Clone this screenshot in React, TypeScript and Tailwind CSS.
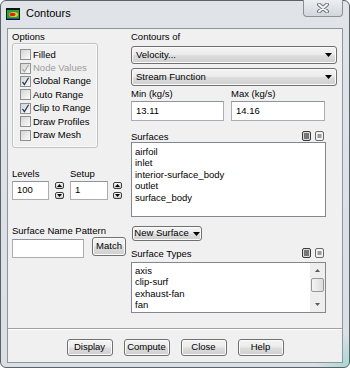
import type { ReactNode } from "react";

const btn =
  "flex items-center justify-center whitespace-nowrap rounded-[3px] border border-[#707070] bg-[linear-gradient(to_bottom,#f4f4f4_0%,#ebebeb_48%,#dddddd_52%,#cfcfcf_100%)] shadow-[inset_0_0_0_1px_#fbfbfb]";
const input = "border border-[#abadb3] border-t-[#8f939b] bg-white";
const arrowBox =
  "flex h-[7px] w-[9px] items-center justify-center rounded-[2px] border border-[#3c3c3c] bg-[linear-gradient(to_bottom,#f6f6f6,#cdcdcd)]";

function Check({ label, checked = false, disabled = false }: { label: string; checked?: boolean; disabled?: boolean }) {
  return (
    <div className="flex h-[13.4px] items-center gap-[2px]">
      <span className="flex h-[11px] w-[11px] items-center justify-center border border-[#8e8f8f] bg-[linear-gradient(135deg,#d4d4d4,#fbfbfb)]">
        {checked && (
          <svg width="9" height="9" viewBox="0 0 9 9">
            <path d="M1.5 4.8 L3.4 7.6 L7.6 0.8" fill="none" stroke={disabled ? "#a8a8a8" : "#24345a"} strokeWidth="1.2" />
          </svg>
        )}
      </span>
      <span className={disabled ? "text-[#9b9b9b]" : ""}>{label}</span>
    </div>
  );
}

function Spin() {
  return (
    <div className="flex flex-col gap-[3px] pt-[1px]">
      <span className={arrowBox}>
        <svg width="5" height="3">
          <path d="M0 3 L2.5 0 L5 3 Z" fill="#000" />
        </svg>
      </span>
      <span className={arrowBox}>
        <svg width="5" height="3">
          <path d="M0 0 L5 0 L2.5 3 Z" fill="#000" />
        </svg>
      </span>
    </div>
  );
}

function SelIcon({ all = false }: { all?: boolean }) {
  return (
    <svg width="9" height="10" viewBox="0 0 9 10">
      <rect x="0.5" y="0.5" width="8" height="9" rx="1.5" fill={all ? "#dcdcdc" : "#f2f2f2"} stroke={all ? "#3a3a3a" : "#6a6a6a"} />
      {all ? (
        <path d="M2 3 H7 M2 5 H7 M2 7 H7" stroke="#111" strokeWidth="1.2" />
      ) : (
        <path d="M2.5 4 H6.5 M2.5 6 H6.5" stroke="#444" strokeWidth="1" />
      )}
    </svg>
  );
}

function ListHead({ label }: { label: string }) {
  return (
    <div className="flex h-[11px] w-[195px] items-end justify-between pr-[2px]">
      <span className="leading-[11px]">{label}</span>
      <div className="flex gap-[4px] self-start">
        <SelIcon all />
        <SelIcon />
      </div>
    </div>
  );
}

function Drop({ children }: { children: ReactNode }) {
  return (
    <div className={`${btn} h-[18px] w-[206px] !justify-between pl-[4px] pr-[4px]`}>
      <span>{children}</span>
      <svg width="7" height="4">
        <path d="M0 0 L7 0 L3.5 4 Z" fill="#000" />
      </svg>
    </div>
  );
}

export default function App() {
  return (
    <div className="flex h-[368px] w-[350px] flex-col rounded-[6px] border border-[#5d6168] bg-[radial-gradient(circle_at_100%_100%,#a6d8d2_0,transparent_34px),linear-gradient(to_bottom,#e0e4e9,#dadfe5)] px-[6px] pb-[4px] font-['Liberation_Sans',Arial,sans-serif] text-[9.5px] text-black">
      {/* title bar */}
      <div className="flex h-[27px] items-center">
        <svg width="14" height="12" viewBox="0 0 14 12" className="ml-[-1px] mt-[-2px]">
          <rect x="0" y="0" width="14" height="12" fill="#141414" />
          <rect x="1" y="2" width="12" height="9" fill="#22a83a" />
          <ellipse cx="7.5" cy="6.5" rx="4.5" ry="2.6" fill="#e6d21c" />
          <ellipse cx="6.5" cy="6.5" rx="3" ry="1.7" fill="#dd2222" />
          <rect x="1" y="10" width="12" height="1" fill="#1f4fb8" />
        </svg>
        <span className="ml-[6px] mt-[-2px] text-[11px]">Contours</span>
        <div className="mb-auto ml-auto mt-[-1px] flex h-[17px] w-[40px] items-center justify-center rounded-b-[4px] border border-t-0 border-[#8a9098] bg-[linear-gradient(to_bottom,#eceff2,#d2d7dd)]">
          <svg width="14" height="10" viewBox="0 0 14 10">
            <path d="M3 1.5 L11 8.5 M11 1.5 L3 8.5" stroke="#6e737a" strokeWidth="4" strokeLinecap="round" />
            <path d="M3 1.5 L11 8.5 M11 1.5 L3 8.5" stroke="#f5f5f5" strokeWidth="2" strokeLinecap="round" />
          </svg>
        </div>
      </div>

      {/* client area */}
      <div className="flex flex-1 flex-col border border-[#8f959c] bg-[#f0f0f0]">
        <div className="flex gap-[5px] pl-[4px] pt-[2px]">
          {/* left column */}
          <div className="flex w-[114px] flex-col">
            <div className="h-[12px] leading-[12px]">Options</div>
            <div className="h-[105px] w-[86px] rounded-[3px] border border-[#bcc3ca] pl-[7px] pt-[4px] shadow-[inset_0_0_0_1px_#fbfbfb]">
              <Check label="Filled" />
              <Check label="Node Values" checked disabled />
              <Check label="Global Range" checked />
              <Check label="Auto Range" />
              <Check label="Clip to Range" checked />
              <Check label="Draw Profiles" />
              <Check label="Draw Mesh" />
            </div>

            <div className="mt-[20px] flex">
              <div className="flex w-[58px] flex-col">
                <div className="h-[12px] leading-[12px]">Levels</div>
                <div className="mt-[1px] flex">
                  <div className={`${input} flex h-[19px] w-[37px] items-center pl-[4px]`}>100</div>
                  <div className="ml-[6px]">
                    <Spin />
                  </div>
                </div>
              </div>
              <div className="flex flex-col">
                <div className="h-[12px] leading-[12px]">Setup</div>
                <div className="mt-[1px] flex">
                  <div className={`${input} flex h-[19px] w-[38px] items-center pl-[4px]`}>1</div>
                  <div className="ml-[5px]">
                    <Spin />
                  </div>
                </div>
              </div>
            </div>

            <div className="mt-[25px] h-[12px] leading-[12px]">Surface Name Pattern</div>
            <div className="flex items-start">
              <div className={`${input} mt-[2px] h-[19px] w-[72px]`} />
              <div className={`${btn} ml-[8px] h-[19px] w-[34px]`}>Match</div>
            </div>
          </div>

          {/* right column */}
          <div className="flex w-[206px] flex-col">
            <div className="h-[12px] leading-[12px]">Contours of</div>
            <div className="mt-[3px]">
              <Drop>Velocity...</Drop>
            </div>
            <div className="mt-[4px]">
              <Drop>Stream Function</Drop>
            </div>
            <div className="mt-[2px] flex gap-[7px]">
              <div className="flex w-[93px] flex-col">
                <div className="h-[12px] leading-[12px]">Min (kg/s)</div>
                <div className={`${input} mt-[1px] flex h-[20px] items-center pl-[4px]`}>13.11</div>
              </div>
              <div className="flex w-[94px] flex-col">
                <div className="h-[12px] leading-[12px]">Max (kg/s)</div>
                <div className={`${input} mt-[1px] flex h-[20px] items-center pl-[4px]`}>14.16</div>
              </div>
            </div>

            <div className="mt-[10px]">
              <ListHead label="Surfaces" />
            </div>
            <div className="h-[75px] w-[195px] border border-[#828790] bg-white pl-[3px] pt-[3px] leading-[11.4px]">
              <div>airfoil</div>
              <div>inlet</div>
              <div>interior-surface_body</div>
              <div>outlet</div>
              <div>surface_body</div>
            </div>

            <div className={`${btn} ml-[1px] mt-[9px] h-[15px] w-[70px] gap-[4px]`}>
              <span>New Surface</span>
              <svg width="7" height="4">
                <path d="M0 0 L7 0 L3.5 4 Z" fill="#000" />
              </svg>
            </div>

            <div className="mt-[7px]">
              <ListHead label="Surface Types" />
            </div>
            <div className="mt-[3px] flex h-[51px] w-[195px] border border-[#828790] bg-white">
              <div className="flex-1 pl-[3px] pt-[2px] leading-[11.4px]">
                <div>axis</div>
                <div>clip-surf</div>
                <div>exhaust-fan</div>
                <div>fan</div>
              </div>
              <div className="flex w-[15px] flex-col bg-[#eeeeee]">
                <div className="flex h-[15px] items-center justify-center">
                  <svg width="5" height="3">
                    <path d="M0 3 L2.5 0 L5 3 Z" fill="#5a5a5a" />
                  </svg>
                </div>
                <div className="mx-[1px] h-[14px] rounded-[2px] border border-[#979797] bg-[linear-gradient(to_right,#f4f4f4,#dcdcdc)]" />
                <div className="flex-1" />
                <div className="flex h-[15px] items-center justify-center">
                  <svg width="5" height="3">
                    <path d="M0 0 L5 0 L2.5 3 Z" fill="#5a5a5a" />
                  </svg>
                </div>
              </div>
            </div>
          </div>
        </div>

        {/* bottom buttons */}
        <div className="mt-auto h-[2px] border-t border-b border-t-[#a0a0a0] border-b-white" />
        <div className="flex justify-center gap-[11px] pb-[6px] pt-[9px]">
          <div className={`${btn} h-[17px] w-[46px]`}>Display</div>
          <div className={`${btn} h-[17px] w-[46px]`}>Compute</div>
          <div className={`${btn} h-[17px] w-[46px]`}>Close</div>
          <div className={`${btn} h-[17px] w-[46px]`}>Help</div>
        </div>
      </div>
    </div>
  );
}
